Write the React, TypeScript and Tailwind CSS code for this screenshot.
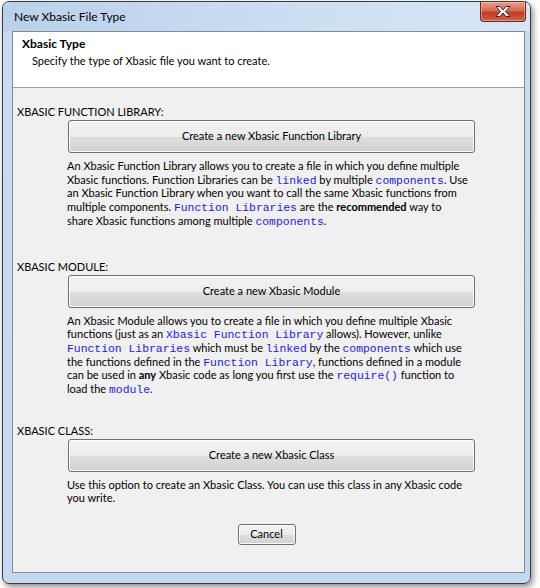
import type { ReactNode } from 'react';

const font = "font-['Lato','Liberation_Sans',Arial,sans-serif]";

function Code({ children }: { children: ReactNode }) {
  return (
    <span className="font-['Liberation_Mono','Courier_New',monospace] text-[11.4px] leading-[10px] text-[#1a1aee]">{children}</span>
  );
}

function WinButton({ label, className }: { label: string; className?: string }) {
  return (
    <button
      className={`flex items-center justify-center rounded-[3px] border border-[#707070] bg-[linear-gradient(to_bottom,#f3f3f3_0%,#ececec_50%,#dedede_51%,#d2d2d2_100%)] text-[11px] text-black shadow-[inset_0_0_0_1px_#fbfbfb] ${className ?? ''}`}
    >
      {label}
    </button>
  );
}

function Section({
  title,
  button,
  children,
  className,
}: {
  title: string;
  button: string;
  children: ReactNode;
  className?: string;
}) {
  return (
    <div className={`flex flex-col ${className ?? ''}`}>
      <div className="pl-[4px] text-[11px] leading-[14px]">{title}</div>
      <WinButton label={button} className="ml-[55px] mt-[1px] h-[33px] w-[407px]" />
      <p className="ml-[54px] mt-[6px] whitespace-nowrap text-[11px] leading-[13.7px]">{children}</p>
    </div>
  );
}

export default function App() {
  return (
    <div className={`min-h-[588px] w-[540px] bg-white pl-[2px] pt-[1px] ${font}`}>
      <div className="flex h-[583px] w-[529px] flex-col rounded-[7px] border border-[#3c3c3c] bg-[linear-gradient(to_bottom,#bcd2ec,#c9dcf1_40px,#c4d8ef)] shadow-[2px_3px_6px_rgba(0,0,0,0.45)]">
        {/* title bar */}
        <div className="flex h-[29px] items-start justify-between rounded-t-[6px] bg-[linear-gradient(to_right,#bad1ea,#cddff3_60%,#d8e6f6)]">
          <span className="self-center pl-[11px] pt-[1px] text-[12px] text-black">New Xbasic File Type</span>
          <div className="mr-[4px] flex h-[20px] w-[46px] items-center justify-center rounded-b-[4px] border border-t-0 border-[#6e2418] bg-[linear-gradient(to_bottom,#e8a08c_0%,#d66a52_45%,#c23a22_55%,#d2604a_100%)] shadow-[inset_0_0_0_1px_rgba(255,210,200,0.5)]">
            <svg width="18" height="13" viewBox="0 0 18 13">
              <path
                d="M2 1.5 L6 1.5 L9 5 L12 1.5 L16 1.5 L11.3 6.5 L16 11.5 L12 11.5 L9 8 L6 11.5 L2 11.5 L6.7 6.5 Z"
                fill="#ffffff"
                stroke="#3a2a2a"
                strokeWidth="1"
                strokeLinejoin="round"
              />
            </svg>
          </div>
        </div>

        {/* client area */}
        <div className="mb-[10px] ml-[9px] mr-[5px] flex flex-1 flex-col border border-[#7d8b9b] bg-[#f0f0f0] text-black">
          <div className="h-[56px] border-b border-[#a0a0a0] bg-white">
            <div className="pl-[9px] pt-[4px] text-[12px] font-bold leading-[15px]">Xbasic Type</div>
            <div className="pl-[19px] pt-[2px] text-[11px] leading-[15px]">Specify the type of Xbasic file you want to create.</div>
          </div>

          <Section title="XBASIC FUNCTION LIBRARY:" button="Create a new Xbasic Function Library" className="mt-[17px]">
            An Xbasic Function Library allows you to create a file in which you define multiple
            <br />
            Xbasic functions. Function Libraries can be <Code>linked</Code> by multiple <Code>components</Code>. Use
            <br />
            an Xbasic Function Library when you want to call the same Xbasic functions from
            <br />
            multiple components. <Code>Function Libraries</Code> are the <b>recommended</b> way to
            <br />
            share Xbasic functions among multiple <Code>components</Code>.
          </Section>

          <Section title="XBASIC MODULE:" button="Create a new Xbasic Module" className="mt-[32px]">
            An Xbasic Module allows you to create a file in which you define multiple Xbasic
            <br />
            functions (just as an <Code>Xbasic Function Library</Code> allows). However, unlike
            <br />
            <Code>Function Libraries</Code> which must be <Code>linked</Code> by the <Code>components</Code> which use
            <br />
            the functions defined in the <Code>Function Library</Code>, functions defined in a module
            <br />
            can be used in <b>any</b> Xbasic code as long you first use the <Code>require()</Code> function to
            <br />
            load the <Code>module</Code>.
          </Section>

          <Section title="XBASIC CLASS:" button="Create a new Xbasic Class" className="mt-[28px]">
            Use this option to create an Xbasic Class. You can use this class in any Xbasic code
            <br />
            you write.
          </Section>

          <div className="mt-[19px] flex justify-center">
            <WinButton label="Cancel" className="ml-[-4px] h-[21px] w-[58px]" />
          </div>
        </div>
      </div>
    </div>
  );
}
